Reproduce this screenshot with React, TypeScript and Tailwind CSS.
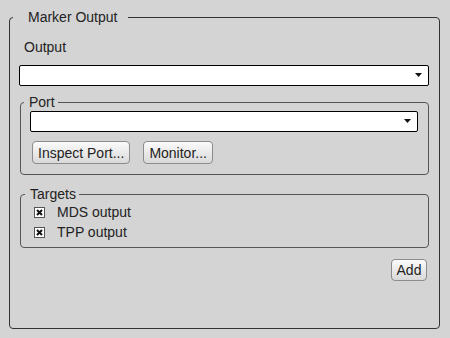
import React from 'react';

const font = { fontFamily: '"Liberation Sans", Arial, sans-serif' };

function Select() {
  return (
    <div className="relative h-[21px] w-full rounded-[2px] border border-black bg-white">
      {/* dropdown caret */}
      <svg className="absolute right-[6px] top-[7px]" width="7" height="4" viewBox="0 0 7 4">
        <path d="M0 0H7L3.5 4Z" fill="#111" />
      </svg>
    </div>
  );
}

function Button({ label }: { label: string }) {
  return (
    <button className="h-[23px] rounded-[4px] border border-[#8c8c8c] bg-gradient-to-b from-[#fbfbfb] to-[#d9d9d9] px-[5px] text-[14px] leading-[16px] text-[#222]">
      {label}
    </button>
  );
}

function Check({ label }: { label: string }) {
  return (
    <div className="flex h-[20px] items-center">
      <div className="flex h-[11px] w-[11px] items-center justify-center border border-[#555] bg-white">
        <svg width="7" height="7" viewBox="0 0 7 7">
          <path d="M1 1L6 6M6 1L1 6" stroke="#111" strokeWidth="2" />
        </svg>
      </div>
      <span className="ml-[12px]">{label}</span>
    </div>
  );
}

export default function App() {
  return (
    <div
      className="h-[338px] w-[450px] bg-[#d4d4d4] pl-[9px] pt-[9px] text-[14px] leading-[16px] text-[#222]"
      style={font}
    >
      {/* Marker Output group */}
      <fieldset className="flex h-[320px] w-[431px] flex-col rounded-[4px] border border-[#333] pl-[9px] pr-[10px]">
        <legend className="ml-[-6px] pl-[15px] pr-[11px]">Marker Output</legend>

        <div className="ml-[5px] mt-[14px]">Output</div>
        <div className="mt-[10px]">
          <Select />
        </div>

        {/* Port */}
        <fieldset className="ml-[1px] mt-[8px] rounded-[4px] border border-[#555] pb-[10px] pl-[9px] pr-[10px]">
          <legend className="ml-[-6px] pl-[5px] pr-[3px]">Port</legend>
          <div className="mt-[1px]">
            <Select />
          </div>
          <div className="mt-[9px] flex gap-[13px] pl-[2px]">
            <Button label="Inspect Port..." />
            <Button label="Monitor..." />
          </div>
        </fieldset>

        {/* Targets */}
        <fieldset className="ml-[1px] mt-[11px] rounded-[4px] border border-[#555] pb-[5px] pl-[13px]">
          <legend className="ml-[-9px] pl-[5px] pr-[3px]">Targets</legend>
          <div>
            <Check label="MDS output" />
            <Check label="TPP output" />
          </div>
        </fieldset>

        <div className="mr-[2px] mt-[11px] flex justify-end">
          <button className="h-[22px] w-[36px] rounded-[4px] border border-[#8c8c8c] bg-gradient-to-b from-[#fbfbfb] to-[#d9d9d9] text-[14px] leading-[16px] text-[#222]">
            Add
          </button>
        </div>
      </fieldset>
    </div>
  );
}
